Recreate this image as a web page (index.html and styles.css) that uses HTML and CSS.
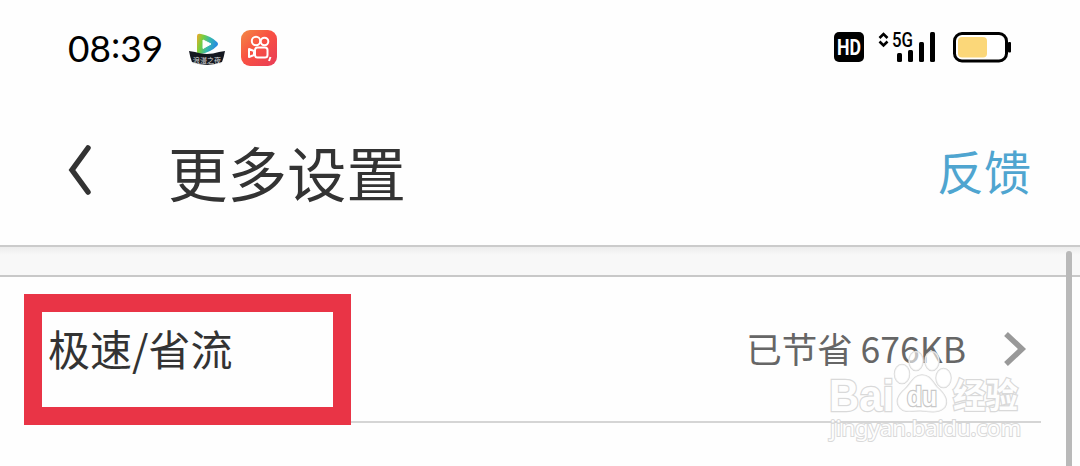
FILE: index.html
```html
<!DOCTYPE html>
<html lang="zh-CN">

<head>
  <meta charset="UTF-8" />
  <meta name="viewport"
    content="width=device-width, initial-scale=1.0" />
  <title>更多设置</title>
  <link rel="stylesheet" href="styles.css">
</head>

<body>

  <div class="status">
    <span class="time">08<span class="colon">:</span>39</span>
    <svg class="app-video" width="38" height="36" viewBox="0 0 38 36">
      <defs>
        <linearGradient id="play" x1="0" y1="0" x2="1" y2="0.3">
          <stop offset="0" stop-color="#f5a52b" />
          <stop offset="0.3" stop-color="#79ce3a" />
          <stop offset="0.65" stop-color="#35b7b0" />
          <stop offset="1" stop-color="#268be0" />
        </linearGradient>
      </defs>
      <path d="M9 4Q9 1 13 2Q23 4 29 10Q31 12 29 14Q23 20 13 22Q9 23 9 19Z" fill="url(#play)" />
      <path d="M15 8L23 12L15 16.500Z" fill="#fff" stroke="#fff" stroke-linejoin="round" />
      <path d="M1 19L7 20Q19 24 31 20L37 19Q36 25 34 30Q19 36 4 30Q2 25 1 19Z" fill="#151820" />
      <text x="19" y="30.500" class="ribbon">浪漫之夜</text>
    </svg>
    <svg class="app-camera" width="36" height="36" viewBox="0 0 36 36">
      <defs>
        <linearGradient id="warm" x1="0" y1="0" x2="1" y2="1">
          <stop offset="0" stop-color="#f28a45" />
          <stop offset="0.45" stop-color="#f95142" />
          <stop offset="1" stop-color="#e83c58" />
        </linearGradient>
      </defs>
      <rect width="36" height="36" rx="9" fill="url(#warm)" />
      <g fill="none" stroke="#fff" stroke-width="2">
        <circle cx="15" cy="11" r="4.200" />
        <circle cx="23.500" cy="11.500" r="3.800" />
        <rect x="14" y="17.500" width="12.500" height="10" rx="2.500" />
        <path d="M13 21L8 19V27L13 25Z" stroke-linejoin="round" />
        <path d="M29.500 27L28 31" />
      </g>
    </svg>

    <svg class="signals" width="180" height="34" viewBox="0 0 180 34">
      <rect x="0" y="1" width="30" height="30" rx="5" />
      <text x="15" y="23.500" class="hd" textLength="24" lengthAdjust="spacingAndGlyphs">HD</text>
      <path d="M45.500 7L49.500 3L53.500 7M45.500 10.500L49.500 14.500L53.500 10.500" fill="none" stroke="#000" stroke-width="2.600" />
      <text x="58" y="15.500" class="network" textLength="21" lengthAdjust="spacingAndGlyphs">5G</text>
      <rect x="63" y="22" width="5" height="9" rx="1.500" />
      <rect x="74" y="19" width="5" height="12" rx="1.500" />
      <rect x="85" y="11" width="5" height="20" rx="1.500" />
      <rect x="96" y="1" width="5" height="30" rx="1.500" />
      <rect x="120.500" y="2.500" width="52" height="27.500" rx="7.500" fill="#fff" stroke="#000" stroke-width="3" />
      <rect x="124" y="6" width="29" height="20.500" rx="4" fill="#fbd779" />
      <rect x="174" y="11" width="3" height="10.500" rx="1" />
    </svg>
  </div>

  <header class="header">
    <svg class="back" width="24" height="50" viewBox="0 0 24 50">
      <path d="M20 3L4 25L20 47" />
    </svg>
    <h1 class="title">更多设置</h1>
    <a class="feedback">反馈</a>
  </header>

  <main class="content">
    <div class="band"></div>
    <div class="row">
      <div class="highlight">极速/省流</div>
      <span class="saved">已节省 676KB</span>
      <svg class="more" width="24" height="36" viewBox="0 0 24 36">
        <path d="M3 3L19 18L3 33" />
      </svg>
    </div>
    <div class="scrollbar"></div>
  </main>

  <svg class="watermark" width="200" height="104" viewBox="0 0 200 104">
    <g class="paw">
      <ellipse cx="77" cy="29" rx="7.500" ry="9.500" />
      <ellipse cx="91" cy="16" rx="7" ry="9.500" />
      <ellipse cx="107" cy="16" rx="7" ry="9.500" />
      <ellipse cx="118.500" cy="33" rx="7.500" ry="9.500" />
      <path d="M97 30C88 30 86 39 80 44C73 50 70 57 75 63C80 69 90 65 98 66C107 67 115 68 120 62C124 55 119 48 112 42C107 36 105 30 97 30Z" />
    </g>
    <text x="4" y="65.500" class="brand" textLength="65" lengthAdjust="spacingAndGlyphs">Bai</text>
    <text x="82" y="61" class="du" textLength="30" lengthAdjust="spacingAndGlyphs">du</text>
    <text x="128" y="63" class="jingyan" textLength="65" lengthAdjust="spacingAndGlyphs">经验</text>
    <text x="5" y="91" class="site" textLength="191" lengthAdjust="spacingAndGlyphs">jingyan.baidu.com</text>
  </svg>

</body>

</html>
```

FILE: styles.css
```css
* {
  box-sizing: border-box;
}

body {
  position: relative;
  width: 1080px;
  height: 466px;
  margin: 0;
  overflow: hidden;
  background-color: #fefefe;
  color: #333;
  font-family: "Noto Sans CJK SC", sans-serif;
}

.status {
  display: flex;
  align-items: center;
  height: 96px;
  padding: 0 66px 0 68px;
}

.time {
  width: 120px;
  margin-top: -1px;
  color: #000;
  font-family: Lato, sans-serif;
  font-size: 37px;
  line-height: 44px;
}

.colon {
  vertical-align: 4px;
  line-height: 1;
}

.app-video {
  margin-top: 3px;
}

.app-camera {
  margin-left: 15px;
}

.signals {
  margin-left: auto;
  overflow: visible;
}

.ribbon {
  fill: #ddd;
  font-size: 7px;
  text-anchor: middle;
}

.hd {
  fill: #fff;
  font-family: Roboto, sans-serif;
  font-size: 22px;
  font-weight: 700;
  text-anchor: middle;
}

.network {
  font-family: Roboto, sans-serif;
  font-size: 20px;
  font-weight: 500;
}

.header {
  display: flex;
  align-items: center;
  height: 149px;
  padding: 0 49px 0 68px;
}

.back {
  margin-bottom: 1px;
  fill: none;
  stroke: #333;
  stroke-width: 5.5px;
  stroke-linecap: round;
}

.title {
  margin: 0 auto 0 76px;
  font-size: 59.5px;
  font-weight: 400;
  line-height: 80px;
}

.feedback {
  margin-bottom: 2px;
  color: #4fa5d0;
  font-size: 47px;
  line-height: 64px;
}

.content {
  position: relative;
  height: 221px;
}

.band {
  height: 32px;
  border-top: 2px solid #cbcbcb;
  border-bottom: 2px solid #c8c8c8;
  background: linear-gradient(#ececec, #f8f8f8 8px);
}

.row {
  display: flex;
  align-items: center;
  height: 146px;
  margin: 0 39px 0 24px;
  border-bottom: 2px solid #d5d5d5;
}

/* The frame reaches a little below the row divider. */
.highlight {
  width: 327px;
  height: 131px;
  margin: 0 auto -21px 0;
  padding: 5px 6px 0;
  border: 18px solid #e93446;
  background-color: #fefefe;
  font-size: 42px;
  line-height: 62px;
}

.saved {
  margin-bottom: 2px;
  color: #666;
  font-size: 35.5px;
  line-height: 52px;
}

.more {
  margin: 0 14px 0 37px;
  fill: none;
  stroke: #999;
  stroke-width: 5.5px;
}

.scrollbar {
  position: absolute;
  top: 6px;
  right: 8px;
  bottom: 0;
  width: 6px;
  border-radius: 3px 3px 0 0;
  background-color: #b9b9b9;
}

/* Each shape is a white face with a thin grey rim behind it. */
.watermark {
  position: absolute;
  top: 345px;
  left: 825px;
  overflow: visible;
  fill: #fefefe;
  stroke: #d9d9d9;
  stroke-width: 2.5px;
  paint-order: stroke;
}

.paw {
  fill: rgba(255, 255, 255, 0.6);
  stroke-width: 1.5px;
}

.brand,
.du {
  font-family: "Liberation Sans", sans-serif;
  font-size: 45px;
  font-weight: 700;
}

.du {
  font-size: 27px;
  stroke: #c8c8c8;
}

.jingyan {
  font-size: 34px;
  font-weight: 700;
}

.site {
  font-family: "Noto Sans", sans-serif;
  font-size: 22px;
  stroke-width: 2px;
}
```
